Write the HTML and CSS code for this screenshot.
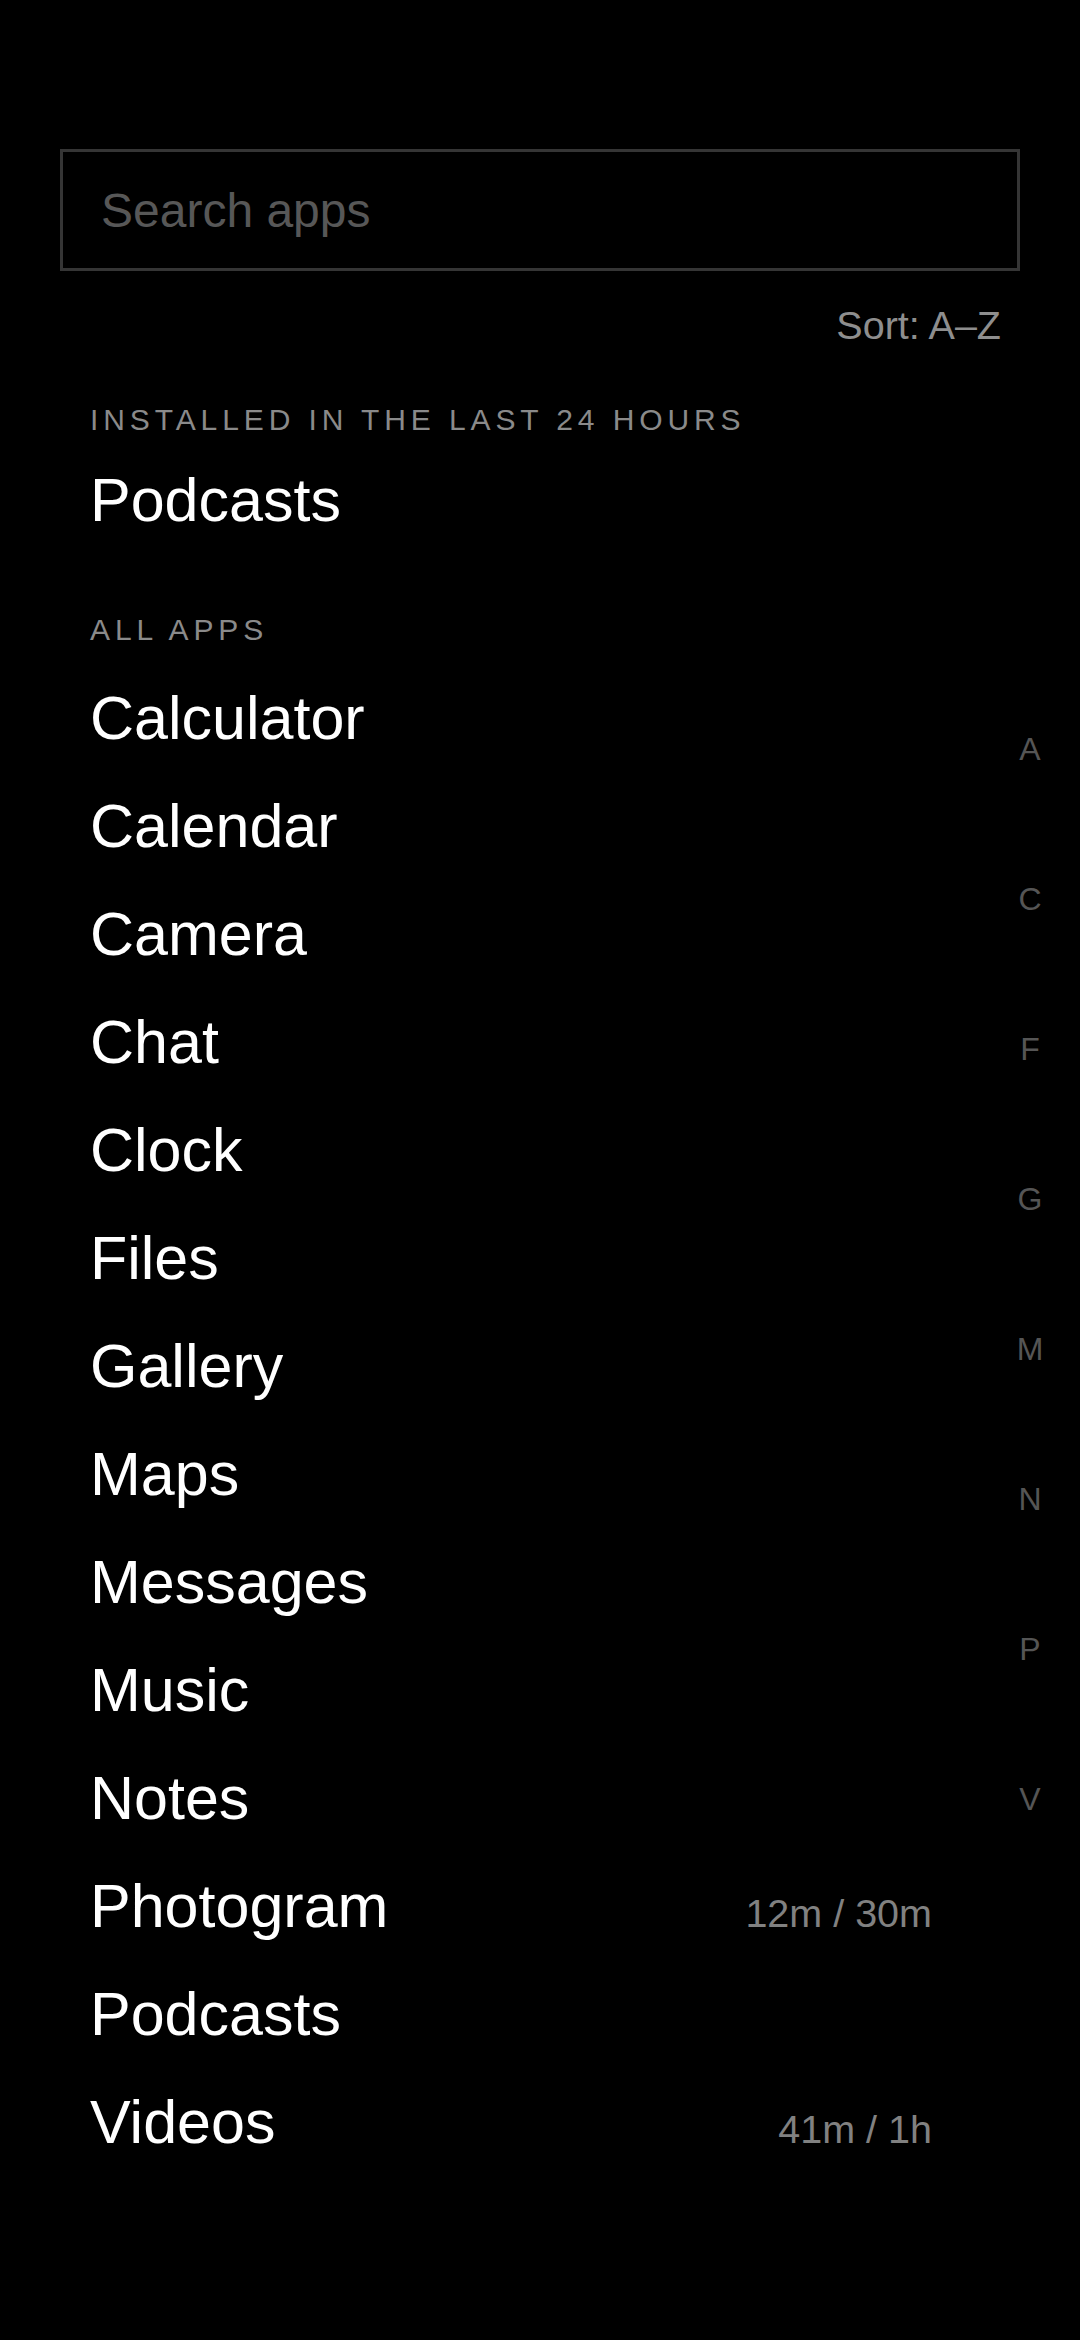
FILE: index.html
```html
<!DOCTYPE html>
<html lang="en">
<head>
<meta charset="utf-8">
<meta name="viewport" content="width=1080">
<title>Apps</title>
<link rel="stylesheet" href="styles.css">
</head>
<body>
<main class="screen">
  <div class="search"><span class="placeholder">Search apps</span></div>
  <div class="sort">Sort: A–Z</div>

  <section class="recent">
    <h2 class="section-label label-installed">INSTALLED IN THE LAST 24 HOURS</h2>
    <div class="app-row"><span class="app-name">Podcasts</span></div>
  </section>

  <h2 class="section-label label-all">ALL APPS</h2>
  <section class="all-apps">
    <div class="app-list">
      <div class="app-row"><span class="app-name">Calculator</span></div>
      <div class="app-row"><span class="app-name">Calendar</span></div>
      <div class="app-row"><span class="app-name">Camera</span></div>
      <div class="app-row"><span class="app-name">Chat</span></div>
      <div class="app-row"><span class="app-name">Clock</span></div>
      <div class="app-row"><span class="app-name">Files</span></div>
      <div class="app-row"><span class="app-name">Gallery</span></div>
      <div class="app-row"><span class="app-name">Maps</span></div>
      <div class="app-row"><span class="app-name">Messages</span></div>
      <div class="app-row"><span class="app-name">Music</span></div>
      <div class="app-row"><span class="app-name">Notes</span></div>
      <div class="app-row"><span class="app-name">Photogram</span><span class="usage">12m / 30m</span></div>
      <div class="app-row"><span class="app-name">Podcasts</span></div>
      <div class="app-row"><span class="app-name">Videos</span><span class="usage">41m / 1h</span></div>
    </div>
    <nav class="index">
      <span>A</span><span>C</span><span>F</span><span>G</span><span>M</span><span>N</span><span>P</span><span>V</span>
    </nav>
  </section>
</main>
</body>
</html>
```

FILE: styles.css
```css
html, body {
  margin: 0;
  padding: 0;
  background: #000;
}

body {
  width: 1080px;
  min-height: 2340px;
  font-family: "Liberation Sans", Arial, Helvetica, sans-serif;
  color: #fff;
}

.screen {
  padding-top: 149px;
}

.search {
  margin: 0 60px;
  height: 122px;
  box-sizing: border-box;
  border: 3px solid #353535;
  padding-left: 38px;
  display: flex;
  align-items: center;
}

.placeholder {
  font-size: 48px;
  color: #575757;
}

.sort {
  margin-top: 31px;
  padding-right: 79px;
  text-align: right;
  font-size: 39.5px;
  line-height: 47px;
  color: #8e8e8e;
}

.section-label {
  margin: 0;
  padding-left: 90px;
  font-size: 30px;
  line-height: 36px;
  font-weight: normal;
  letter-spacing: 4.9px;
  color: #8a8a8a;
}

.label-installed {
  margin-top: 53px;
}

.recent .app-row {
  margin-top: 8px;
}

.label-all {
  margin-top: 58px;
}

.all-apps {
  margin-top: 16px;
  display: grid;
  grid-template-columns: 1fr 100px;
}

.app-row {
  height: 108px;
  padding: 0 150px 0 90px;
  display: flex;
  align-items: baseline;
  justify-content: space-between;
  line-height: 108px;
}

.app-list .app-row {
  padding-right: 48px;
}

.app-name {
  font-size: 61px;
  color: #fff;
}

.usage {
  font-size: 39.5px;
  color: #818181;
}

.index {
  padding-top: 10px;
  display: flex;
  flex-direction: column;
  align-items: center;
}

.index span {
  height: 150px;
  line-height: 150px;
  font-size: 32px;
  color: #555;
}
```
